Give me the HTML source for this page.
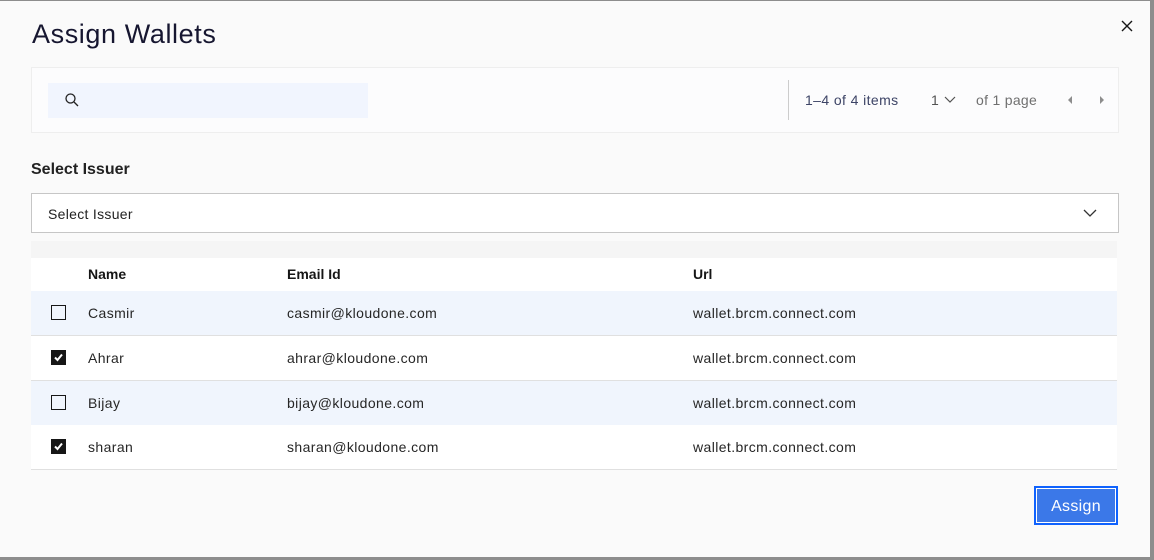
<html><head><style>
body{margin:0;width:1154px;height:560px;background:#8d8d8d;font-family:"Liberation Sans",sans-serif;overflow:hidden;position:relative}
.m{position:absolute;left:0;top:1px;width:1150px;height:556px;background:#fafafa}
.a{position:absolute}
.t{font-size:14px;color:#222;letter-spacing:0.3px}
.row{position:absolute;left:31px;width:1086px;height:44px;border-bottom:1px solid #e0e0e0}
.row span{position:absolute;top:14px;font-size:14px;color:#262626;letter-spacing:0.4px}
.cb{position:absolute;left:20px;top:14px;width:13px;height:13px;border:1.5px solid #161616;box-sizing:content-box}
.ck{background:#161616}
</style></head><body>
<div class="m">
<div class="a" style="left:32px;top:18px;font-size:27px;color:#161630;letter-spacing:0.6px">Assign Wallets</div>
<svg class="a" style="left:1120px;top:18px" width="14" height="14"><path d="M2 2L12 12M12 2L2 12" stroke="#161616" stroke-width="1.4"/></svg>
<div class="a" style="left:31px;top:66px;width:1086px;height:64px;border:1px solid #eeeeee;background:#fcfcfd"></div>
<div class="a" style="left:48px;top:82px;width:320px;height:35px;background:#f1f5fe"></div>
<svg class="a" style="left:64px;top:91px" width="16" height="16"><circle cx="6.5" cy="6.5" r="4.5" fill="none" stroke="#222" stroke-width="1.3"/><path d="M10 10L14 14" stroke="#222" stroke-width="1.3"/></svg>
<div class="a" style="left:788px;top:79px;width:1px;height:40px;background:#ccc"></div>
<div class="a" style="left:805px;top:91px;font-size:14px;color:#3d4466;letter-spacing:0.4px">1–4 of 4 items</div>
<div class="a" style="left:931px;top:91px;font-size:14px;color:#525252">1</div>
<svg class="a" style="left:944px;top:94px" width="12" height="10"><path d="M1 2L6 7L11 2" fill="none" stroke="#525252" stroke-width="1.2"/></svg>
<div class="a" style="left:976px;top:91px;font-size:14px;color:#6f6f6f;letter-spacing:0.3px">of 1 page</div>
<svg class="a" style="left:1066px;top:94px" width="8" height="10"><path d="M6 1L2 5L6 9Z" fill="#8d8d8d"/></svg>
<svg class="a" style="left:1098px;top:94px" width="8" height="10"><path d="M2 1L6 5L2 9Z" fill="#8d8d8d"/></svg>
<div class="a" style="left:31px;top:160px;font-size:16px;font-weight:bold;color:#222">Select Issuer</div>
<div class="a" style="left:31px;top:192px;width:1086px;height:38px;border:1px solid #c6c6c6;background:#fff"></div>
<div class="a t" style="left:48px;top:205px">Select Issuer</div>
<svg class="a" style="left:1083px;top:207px" width="14" height="10"><path d="M1 2L7 8L13 2" fill="none" stroke="#333" stroke-width="1.3"/></svg>
<div class="a" style="left:31px;top:240px;width:1086px;height:17px;background:#f5f5f5"></div>
<div class="a" style="left:31px;top:257px;width:1086px;height:33px;background:#fff"></div>
<div class="a" style="left:88px;top:265px;font-size:14px;font-weight:bold;color:#161616">Name</div>
<div class="a" style="left:287px;top:265px;font-size:14px;font-weight:bold;color:#161616">Email Id</div>
<div class="a" style="left:693px;top:265px;font-size:14px;font-weight:bold;color:#161616">Url</div>
<div class="row" style="top:290px;background:#f0f5fd"><div class="cb"></div><span style="left:57px">Casmir</span><span style="left:256px">casmir@kloudone.com</span><span style="left:662px">wallet.brcm.connect.com</span></div>
<div class="row" style="top:335px;background:#fff"><div class="cb ck"><svg width="13" height="13" style="position:absolute"><path d="M3 6.5L5.5 9L10 3.5" fill="none" stroke="#fff" stroke-width="2"/></svg></div><span style="left:57px">Ahrar</span><span style="left:256px">ahrar@kloudone.com</span><span style="left:662px">wallet.brcm.connect.com</span></div>
<div class="row" style="top:380px;background:#f0f5fd"><div class="cb"></div><span style="left:57px">Bijay</span><span style="left:256px">bijay@kloudone.com</span><span style="left:662px">wallet.brcm.connect.com</span></div>
<div class="row" style="top:424px;background:#fff"><div class="cb ck"><svg width="13" height="13" style="position:absolute"><path d="M3 6.5L5.5 9L10 3.5" fill="none" stroke="#fff" stroke-width="2"/></svg></div><span style="left:57px">sharan</span><span style="left:256px">sharan@kloudone.com</span><span style="left:662px">wallet.brcm.connect.com</span></div>
<div class="a" style="left:1034px;top:485px;width:84px;height:39px;box-sizing:border-box;border:2px solid #0f62fe;background:#3b78e8;box-shadow:inset 0 0 0 1px #fff;color:#fff;font-size:16px;text-align:center;line-height:37px;letter-spacing:0.3px">Assign</div>
</div>
</body></html>
